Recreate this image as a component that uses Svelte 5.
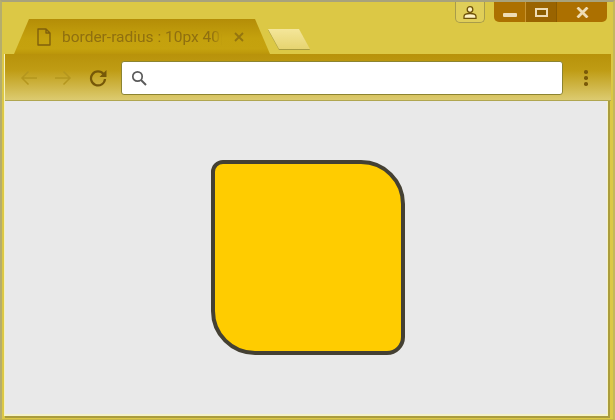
<script>
  let title = "border-radius : 10px 40px 10px 40px";
</script>

<div class="window">
  <header class="frame">
    <div class="tab">
      <svg class="page" viewBox="0 0 14 18" width="14" height="18" aria-hidden="true">
        <path d="M1 1h8l4 4v12H1z M9 1v4h4" fill="none" stroke="#80600c" stroke-width="1.4" stroke-linejoin="round" />
      </svg>
      <span class="title">{title}</span>
      <svg class="close" viewBox="0 0 10 10" width="10" height="10" aria-hidden="true">
        <path d="M1 1l8 8M9 1l-8 8" stroke="#94750f" stroke-width="1.8" />
      </svg>
    </div>
    <div class="new-tab"><span></span></div>
    <button class="user" aria-label="User">
      <svg viewBox="0 0 14 13" width="14" height="13" aria-hidden="true">
        <circle cx="7" cy="3.500" r="2.800" fill="#fff3c4" stroke="#6e5208" stroke-width="1.300" />
        <path d="M1 12.300v-1.800c0-2 2.400-3 6-3s6 1 6 3v1.800z" fill="#fff3c4" stroke="#6e5208" stroke-width="1.300" />
      </svg>
    </button>
    <div class="controls">
      <div class="ctl min"><span></span></div>
      <div class="ctl max"><span></span></div>
      <div class="ctl x">
        <svg viewBox="0 0 13 11" width="13" height="11" aria-hidden="true">
          <path d="M1.500 0.500l10 10M11.500 0.500l-10 10" stroke="#eedcb4" stroke-width="2.800" />
        </svg>
      </div>
    </div>
  </header>

  <div class="inner">
    <nav class="toolbar">
      <svg class="nav first" viewBox="0 0 18 16" width="18" height="16" aria-hidden="true">
        <path d="M17 8H2M8.500 1.500L2 8l6.500 6.500" fill="none" stroke="#b4961e" stroke-width="1.500" />
      </svg>
      <svg class="nav" viewBox="0 0 18 16" width="18" height="16" aria-hidden="true">
        <path d="M1 8h15M9.500 1.500L16 8l-6.500 6.500" fill="none" stroke="#b4961e" stroke-width="1.500" />
      </svg>
      <svg class="nav reload" viewBox="0 0 18 18" width="18" height="18" aria-hidden="true">
        <path d="M14.600 5.200A7 7 0 1 0 16 10" fill="none" stroke="#765808" stroke-width="2.200" />
        <path d="M17.500 1v7h-7z" fill="#765808" />
      </svg>
      <div class="address">
        <svg viewBox="0 0 16 16" width="16" height="16" aria-hidden="true">
          <circle cx="6.500" cy="6.500" r="4.700" fill="none" stroke="#5a5a5a" stroke-width="1.700" />
          <path d="M10 10l5 5" stroke="#5a5a5a" stroke-width="2" />
        </svg>
      </div>
      <div class="menu"><i></i><i></i><i></i></div>
    </nav>

    <main class="content">
      <div class="box"></div>
    </main>
  </div>
</div>

<style>
  :global(body) {
    margin: 0;
  }

  .window {
    width: 615px;
    height: 420px;
    box-sizing: border-box;
    display: flex;
    flex-direction: column;
    overflow: hidden;
    padding: 0 2px 3px 3px;
    background: #dcc845;
    border-top: 2px solid #a8a27c;
    border-left: 2px solid #b5ad6c;
    border-right: 2px solid #c4b858;
    border-bottom: 1px solid #c4b44a;
    font-family: Roboto, sans-serif;
  }

  .frame {
    height: 52px;
    flex: none;
    display: flex;
    padding-left: 9px;
  }

  .tab {
    width: 256px;
    height: 35px;
    margin-top: 17px;
    flex: none;
    box-sizing: border-box;
    display: flex;
    align-items: center;
    padding: 0 23px;
    background: linear-gradient(180deg, #b48d07 0%, #c4a10d 55%, #c5a20e 85%, #bb960a 100%);
    clip-path: polygon(0 100%, 15px 0, 241px 0, 256px 100%);
  }

  .page {
    flex: none;
  }

  .title {
    width: 160px;
    margin-left: 11px;
    flex: none;
    overflow: hidden;
    white-space: nowrap;
    font-size: 15.500px;
    color: #8f6f10;
    mask-image: linear-gradient(90deg, #000 94%, transparent 100%);
  }

  .close {
    margin-left: 12px;
    flex: none;
  }

  .new-tab {
    width: 42px;
    height: 20px;
    margin: 27px 0 0 -2px;
    filter: drop-shadow(0 1px 0 #a89c40);
  }

  .new-tab span {
    display: block;
    height: 100%;
    background: linear-gradient(180deg, #f4e69a, #e6d470);
    clip-path: polygon(0 0, 31px 0, 42px 100%, 11px 100%);
  }

  .user {
    width: 30px;
    height: 21px;
    margin-left: auto;
    padding: 0;
    display: flex;
    align-items: center;
    justify-content: center;
    background: #e0ce58;
    border: 1px solid #a89c4a;
    border-top: none;
    border-radius: 0 0 5px 5px;
  }

  .controls {
    height: 20px;
    margin: 0 4px 0 9px;
    display: flex;
    background: #ac7000;
    border-radius: 0 0 5px 5px;
    overflow: hidden;
  }

  .ctl {
    height: 100%;
    display: flex;
    align-items: center;
    justify-content: center;
  }

  .min {
    width: 31px;
    border-right: 1px solid #c89430;
  }

  .min span {
    width: 14px;
    height: 4px;
    margin-top: 6px;
    border-radius: 1px;
    background: #eedcb4;
  }

  .max {
    width: 30px;
    background: #9a6400;
    border-right: 1px solid #8a5a00;
  }

  .max span {
    width: 9px;
    height: 5px;
    border: 2.500px solid #eedcb4;
    background: #8a5c00;
  }

  .x {
    width: 50px;
  }

  .toolbar {
    height: 47px;
    flex: none;
    display: flex;
    align-items: center;
    box-sizing: border-box;
    padding: 2px 0 0 15px;
    background: linear-gradient(180deg, #b8920a 0%, #bf9c14 35%, #dccb70 100%);
    border-bottom: 1px solid #b0a650;
  }

  .nav {
    flex: none;
    margin-right: 16px;
  }

  .nav.reload {
    margin-right: 14px;
    margin-left: 1px;
  }

  .inner {
    flex: 1;
    display: flex;
    flex-direction: column;
    box-shadow: -1px 0 0 #f4f0c0;
  }

  .address {
    width: 442px;
    height: 34px;
    flex: none;
    box-sizing: border-box;
    display: flex;
    align-items: center;
    padding-left: 9px;
    background: #fff;
    border: 1px solid #8c8430;
    border-radius: 3px;
  }

  .menu {
    display: flex;
    flex-direction: column;
    gap: 2.500px;
    margin-left: 21px;
  }

  .menu i {
    width: 3.500px;
    height: 3.500px;
    border-radius: 50%;
    background: #7a5a08;
  }

  .content {
    flex: 1;
    display: flex;
    align-items: center;
    justify-content: center;
    background: #e9e9e9;
    padding-left: 3px;
    margin-right: 3px;
    border-bottom: 2px solid #f5f2c8;
    border-right: 1px solid #f5f2c8;
    box-shadow: 1px 1px 0 1px #aa9c3c;
  }

  .box {
    width: 186px;
    height: 187px;
    background: #ffcc00;
    border: 4px solid #444033;
    border-radius: 12px 44px 18px 44px;
  }
</style>
